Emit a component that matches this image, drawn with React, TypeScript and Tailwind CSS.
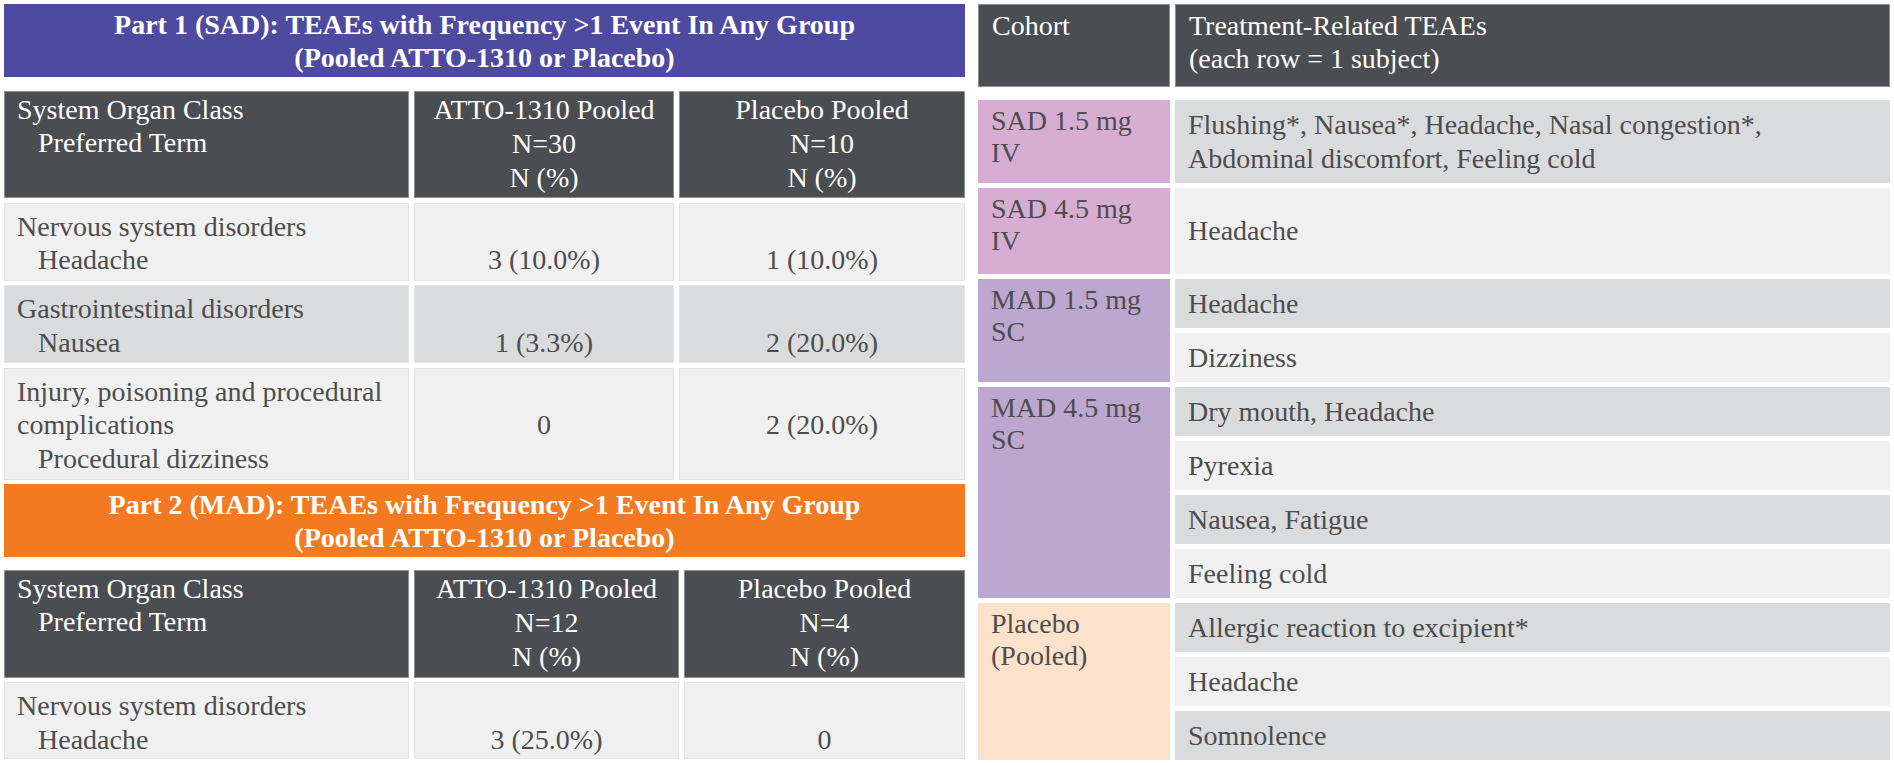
const serif = "font-['Liberation_Serif','Times_New_Roman',serif]";

type SocRow = {
  soc: string[];
  term: string;
  a: string;
  b: string;
  h: string;
  bg: string;
};

const sadRows: SocRow[] = [
  { soc: ["Nervous system disorders"], term: "Headache", a: "3 (10.0%)", b: "1 (10.0%)", h: "h-[78px]", bg: "bg-[#f0f0f0]" },
  { soc: ["Gastrointestinal disorders"], term: "Nausea", a: "1 (3.3%)", b: "2 (20.0%)", h: "h-[78px]", bg: "bg-[#dadbdd]" },
  { soc: ["Injury, poisoning and procedural", "complications"], term: "Procedural dizziness", a: "0", b: "2 (20.0%)", h: "h-[112px]", bg: "bg-[#f0f0f0]" },
];

const madRows: SocRow[] = [
  { soc: ["Nervous system disorders"], term: "Headache", a: "3 (25.0%)", b: "0", h: "h-[77px]", bg: "bg-[#f0f0f0]" },
];

function Banner({ color, part }: { color: string; part: string }) {
  return (
    <div className={`${color} h-[73px] pt-[4px] text-center text-[28px] font-bold leading-[33px] text-white`}>
      <div>{part}: TEAEs with Frequency &gt;1 Event In Any Group</div>
      <div>(Pooled ATTO-1310 or Placebo)</div>
    </div>
  );
}

function SocTable({ n1, n2, rows, cols, headH }: { n1: string; n2: string; rows: SocRow[]; cols: string; headH: string }) {
  return (
    <div className="flex flex-col gap-[4.5px]">
      {/* header */}
      <div className={`grid ${cols} gap-x-[5px] ${headH} text-white`}>
        <div className="border border-[#8c8f93] bg-[#4a4e53] pl-[12px] pt-[1px] leading-[33px]">
          <div>System Organ Class</div>
          <div className="pl-[21px]">Preferred Term</div>
        </div>
        <div className="border border-[#8c8f93] bg-[#4a4e53] pt-[1px] text-center leading-[34px]">
          <div>ATTO-1310 Pooled</div>
          <div>{n1}</div>
          <div>N (%)</div>
        </div>
        <div className="border border-[#8c8f93] bg-[#4a4e53] pt-[1px] text-center leading-[34px]">
          <div>Placebo Pooled</div>
          <div>{n2}</div>
          <div>N (%)</div>
        </div>
      </div>
      {rows.map((r) => (
        <div key={r.term + r.a} className={`grid ${cols} gap-x-[5px] ${r.h} leading-[33.5px] text-[#4d4d4d]`}>
          <div className={`${r.bg} border border-[#e4e4e4] pl-[12px] pt-[6px]`}>
            {r.soc.map((s) => (
              <div key={s}>{s}</div>
            ))}
            <div className="pl-[21px]">{r.term}</div>
          </div>
          <div className={`${r.bg} border border-[#e4e4e4] pt-[39.5px] text-center`}>{r.a}</div>
          <div className={`${r.bg} border border-[#e4e4e4] pt-[39.5px] text-center`}>{r.b}</div>
        </div>
      ))}
    </div>
  );
}

type Cohort = { label: string[]; bg: string; items: { text: string[]; h: string; bg: string }[] };

const cohorts: Cohort[] = [
  {
    label: ["SAD 1.5 mg", "IV"],
    bg: "bg-[#d7add3]",
    items: [{ text: ["Flushing*, Nausea*, Headache, Nasal congestion*,", "Abdominal discomfort, Feeling cold"], h: "h-[83px]", bg: "bg-[#dadbdd]" }],
  },
  {
    label: ["SAD 4.5 mg", "IV"],
    bg: "bg-[#d7add3]",
    items: [{ text: ["Headache"], h: "h-[86px]", bg: "bg-[#f0f0f0]" }],
  },
  {
    label: ["MAD 1.5 mg", "SC"],
    bg: "bg-[#bca7d0]",
    items: [
      { text: ["Headache"], h: "h-[49px]", bg: "bg-[#dadbdd]" },
      { text: ["Dizziness"], h: "h-[49px]", bg: "bg-[#f0f0f0]" },
    ],
  },
  {
    label: ["MAD 4.5 mg", "SC"],
    bg: "bg-[#bca7d0]",
    items: [
      { text: ["Dry mouth, Headache"], h: "h-[49px]", bg: "bg-[#dadbdd]" },
      { text: ["Pyrexia"], h: "h-[49px]", bg: "bg-[#f0f0f0]" },
      { text: ["Nausea, Fatigue"], h: "h-[49px]", bg: "bg-[#dadbdd]" },
      { text: ["Feeling cold"], h: "h-[49px]", bg: "bg-[#f0f0f0]" },
    ],
  },
  {
    label: ["Placebo", "(Pooled)"],
    bg: "bg-[#fde2cb]",
    items: [
      { text: ["Allergic reaction to excipient*"], h: "h-[49px]", bg: "bg-[#dadbdd]" },
      { text: ["Headache"], h: "h-[49px]", bg: "bg-[#f0f0f0]" },
      { text: ["Somnolence"], h: "h-[49px]", bg: "bg-[#dadbdd]" },
    ],
  },
];

function CohortTable() {
  return (
    <div className="flex w-[912px] flex-col">
      <div className="flex h-[83px] gap-x-[5px] text-white">
        <div className="w-[192px] border border-[#8c8f93] bg-[#4a4e53] pl-[13px] pt-[4px] leading-[33px]">Cohort</div>
        <div className="flex-1 border border-[#8c8f93] bg-[#4a4e53] pl-[13px] pt-[4px] leading-[33px]">
          <div>Treatment-Related TEAEs</div>
          <div>(each row = 1 subject)</div>
        </div>
      </div>
      <div className="mt-[13px] flex flex-col gap-y-[5px] text-[#4d4d4d]">
        {cohorts.map((c) => (
          <div key={c.label.join(" ")} className="flex gap-x-[5px]">
            <div className={`${c.bg} w-[192px] pl-[13px] pt-[5px] leading-[32px]`}>
              {c.label.map((l) => (
                <div key={l}>{l}</div>
              ))}
            </div>
            <div className="flex flex-1 flex-col gap-y-[5px]">
              {c.items.map((it, i) => (
                <div key={i} className={`${it.bg} ${it.h} flex flex-col justify-center pl-[13px] leading-[34px]`}>
                  {it.text.map((t) => (
                    <div key={t}>{t}</div>
                  ))}
                </div>
              ))}
            </div>
          </div>
        ))}
      </div>
    </div>
  );
}

export default function App() {
  return (
    <div className={`${serif} h-[765px] w-[1894px] overflow-hidden bg-white text-[28px]`}>
      <div className="flex gap-x-[13px] pl-[4px] pt-[4px]">
        <div className="flex w-[961px] flex-col">
          <Banner color="bg-[#4e4aa0]" part="Part 1 (SAD)" />
          <div className="mt-[14px]">
            <SocTable n1="N=30" n2="N=10" rows={sadRows} cols="grid-cols-[405px_260px_286px]" headH="h-[107px]" />
          </div>
          <div className="mt-[4px]">
            <Banner color="bg-[#f37a21]" part="Part 2 (MAD)" />
          </div>
          <div className="mt-[13px]">
            <SocTable n1="N=12" n2="N=4" rows={madRows} cols="grid-cols-[405px_265px_281px]" headH="h-[108px]" />
          </div>
        </div>
        <CohortTable />
      </div>
    </div>
  );
}
